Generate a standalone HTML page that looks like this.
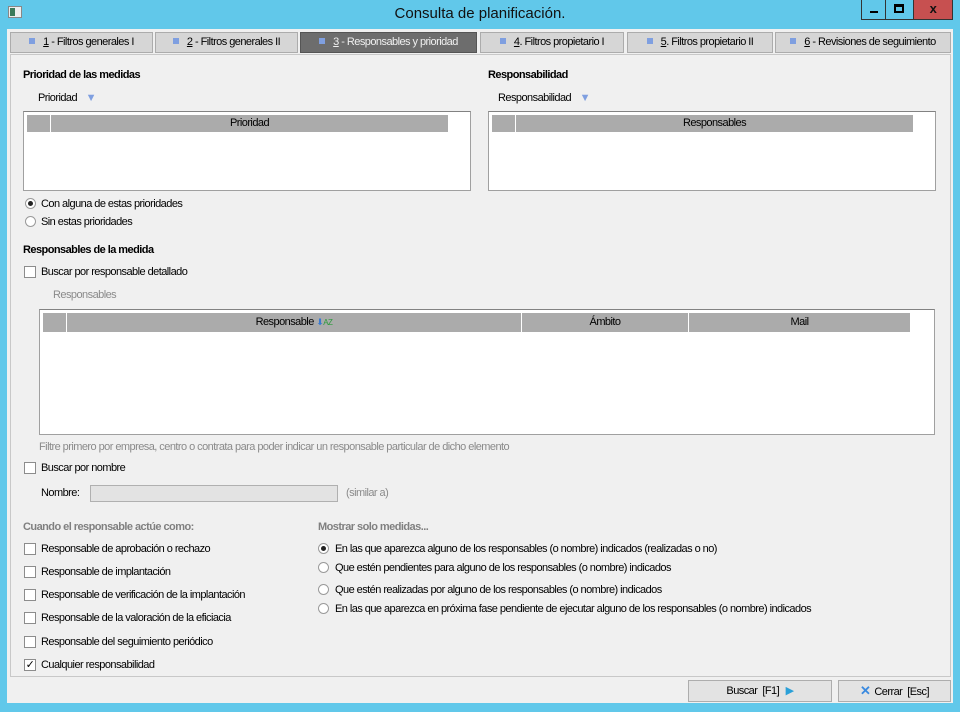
<!DOCTYPE html>
<html><head><meta charset="utf-8"><style>
*{box-sizing:border-box;margin:0;padding:0}
body{width:960px;height:712px;background:#61c8ea;font-family:"Liberation Sans",sans-serif;font-size:11px;line-height:17px;color:#000;position:relative;overflow:hidden;letter-spacing:-0.55px}
.a{position:absolute;white-space:nowrap}
.win{position:absolute;left:7px;top:29px;width:946px;height:674px;background:#f0f0f0}
.tab{position:absolute;top:32px;height:21px;background:#d6d6d6;border:1px solid #acacac;text-align:center;line-height:19px}
.tab i{display:inline-block;width:6px;height:6px;background:#7f9fe0;margin-right:8px;vertical-align:1px}
.panel{position:absolute;left:10px;top:54px;width:941px;height:623px;border:1px solid #c8c8c8;background:#f0f0f0}
.b{font-weight:bold}
.grid{position:absolute;background:#fff;border:1px solid #a0a0a0;border-top-color:#828282}
.hd{position:absolute;background:#ababab;height:17px;border-right:1px solid #fff;text-align:center;line-height:16px}
.cb{position:absolute;width:12px;height:12px;border:1px solid #8c8c8c;background:#fff}
.rd{position:absolute;width:11px;height:11px;border:1px solid #9a9a9a;border-radius:50%;background:#fff}
.rd.on:after{content:"";position:absolute;left:2px;top:2px;width:5px;height:5px;border-radius:50%;background:#222}
.btn{position:absolute;top:680px;height:22px;background:#e3e3e3;border:1px solid #adadad;text-align:center;line-height:20px}
.g{color:#8a8a8a}
</style></head><body>
<div class="a" style="left:8px;top:6px;width:14px;height:12px;background:#eee;border:1px solid #888"><div style="position:absolute;left:1px;top:1px;width:5px;height:8px;background:#3a7a5a"></div></div>
<div class="a" style="left:0;width:960px;top:5px;text-align:center;font-size:15px;letter-spacing:0;color:#111">Consulta de planificación.</div>
<div class="a" style="left:861px;top:0;width:25px;height:20px;background:#61c8ea;border:1px solid #333;border-top:none"><div style="position:absolute;left:8px;top:11px;width:8px;height:2px;background:#000"></div></div>
<div class="a" style="left:886px;top:0;width:27px;height:20px;border-bottom:1px solid #333"><div style="position:absolute;left:8px;top:4px;width:10px;height:9px;border:2px solid #000;border-top-width:3px"></div></div>
<div class="a" style="left:913px;top:0;width:40px;height:20px;background:#c75050;border:1px solid #333;border-top:none;color:#111;font-weight:bold;font-size:13px;text-align:center;line-height:18px">x</div>
<div class="win"></div>
<div class="tab" style="left:10px;width:143px"><i></i><u>1</u> - Filtros generales I</div>
<div class="tab" style="left:155px;width:143px"><i></i><u>2</u> - Filtros generales II</div>
<div class="tab" style="left:300px;width:177px;background:#6d6d6d;color:#f0f0f0;border-color:#555"><i></i><u>3</u> - Responsables y prioridad</div>
<div class="tab" style="left:480px;width:144px"><i></i><u>4</u>. Filtros propietario I</div>
<div class="tab" style="left:627px;width:146px"><i></i><u>5</u>. Filtros propietario II</div>
<div class="tab" style="left:775px;width:176px"><i></i><u>6</u> - Revisiones de seguimiento</div>
<div class="panel"></div>

<div class="a b" style="left:23px;top:67px">Prioridad de las medidas</div>
<div class="a" style="left:38px;top:90px">Prioridad <span style="color:#7f9fe0;margin-left:6px">▼</span></div>
<div class="grid" style="left:23px;top:111px;width:448px;height:80px">
<div class="hd" style="left:3px;top:3px;width:24px"></div><div class="hd" style="left:27px;top:3px;width:398px">Prioridad</div></div>
<div class="a b" style="left:488px;top:67px">Responsabilidad</div>
<div class="a" style="left:498px;top:90px">Responsabilidad <span style="color:#7f9fe0;margin-left:6px">▼</span></div>
<div class="grid" style="left:488px;top:111px;width:448px;height:80px">
<div class="hd" style="left:3px;top:3px;width:24px"></div><div class="hd" style="left:27px;top:3px;width:398px">Responsables</div></div>

<div class="rd on" style="left:25px;top:198px"></div><div class="a" style="left:41px;top:196px">Con alguna de estas prioridades</div>
<div class="rd" style="left:25px;top:216px"></div><div class="a" style="left:41px;top:214px">Sin estas prioridades</div>
<div class="a b" style="left:23px;top:242px">Responsables de la medida</div>
<div class="cb" style="left:24px;top:266px"></div><div class="a" style="left:41px;top:264px">Buscar por responsable detallado</div>
<div class="a g" style="left:53px;top:287px">Responsables</div>
<div class="grid" style="left:39px;top:309px;width:896px;height:126px">
<div class="hd" style="left:3px;top:3px;width:24px;height:19px"></div>
<div class="hd" style="left:27px;top:3px;width:455px;height:19px;line-height:18px">Responsable <span style="color:#3a7ad0;font-size:9px">⬇</span><span style="color:#2a9a3a;font-size:8px">AZ</span></div>
<div class="hd" style="left:482px;top:3px;width:167px;height:19px;line-height:18px">Ámbito</div>
<div class="hd" style="left:649px;top:3px;width:222px;height:19px;line-height:18px">Mail</div></div>
<div class="a g" style="left:39px;top:439px">Filtre primero por empresa, centro o contrata para poder indicar un responsable particular de dicho elemento</div>
<div class="cb" style="left:24px;top:462px"></div><div class="a" style="left:41px;top:460px">Buscar por nombre</div>
<div class="a" style="left:41px;top:485px">Nombre:</div>
<div class="a" style="left:90px;top:485px;width:248px;height:17px;background:#e3e3e3;border:1px solid #b0b0b0"></div>
<div class="a g" style="left:346px;top:485px">(similar a)</div>

<div class="a b g" style="left:23px;top:519px;color:#808080">Cuando el responsable actúe como:</div>
<div class="cb" style="left:24px;top:543px"></div><div class="a" style="left:41px;top:541px">Responsable de aprobación o rechazo</div>
<div class="cb" style="left:24px;top:566px"></div><div class="a" style="left:41px;top:564px">Responsable de implantación</div>
<div class="cb" style="left:24px;top:589px"></div><div class="a" style="left:41px;top:587px">Responsable de verificación de la implantación</div>
<div class="cb" style="left:24px;top:612px"></div><div class="a" style="left:41px;top:610px">Responsable de la valoración de la eficiacia</div>
<div class="cb" style="left:24px;top:636px"></div><div class="a" style="left:41px;top:634px">Responsable del seguimiento periódico</div>
<div class="cb" style="left:24px;top:659px;font-size:11px;line-height:10px;text-align:center">✓</div><div class="a" style="left:41px;top:657px">Cualquier responsabilidad</div>

<div class="a b" style="left:318px;top:519px;color:#808080">Mostrar solo medidas...</div>
<div class="rd on" style="left:318px;top:543px"></div><div class="a" style="left:335px;top:541px">En las que aparezca alguno de los responsables (o nombre) indicados (realizadas o no)</div>
<div class="rd" style="left:318px;top:562px"></div><div class="a" style="left:335px;top:560px">Que estén pendientes para alguno de los responsables (o nombre) indicados</div>
<div class="rd" style="left:318px;top:584px"></div><div class="a" style="left:335px;top:582px">Que estén realizadas por alguno de los responsables (o nombre) indicados</div>
<div class="rd" style="left:318px;top:603px"></div><div class="a" style="left:335px;top:601px">En las que aparezca en próxima fase pendiente de ejecutar alguno de los responsables (o nombre) indicados</div>

<div class="btn" style="left:688px;width:144px">Buscar &nbsp;[F1] <span style="color:#2aa0d8;margin-left:4px">▶</span></div>
<div class="btn" style="left:838px;width:113px"><span style="color:#3a8ae0;font-weight:bold;font-size:13px;margin-right:4px">✕</span>Cerrar &nbsp;[Esc]</div>
</body></html>
